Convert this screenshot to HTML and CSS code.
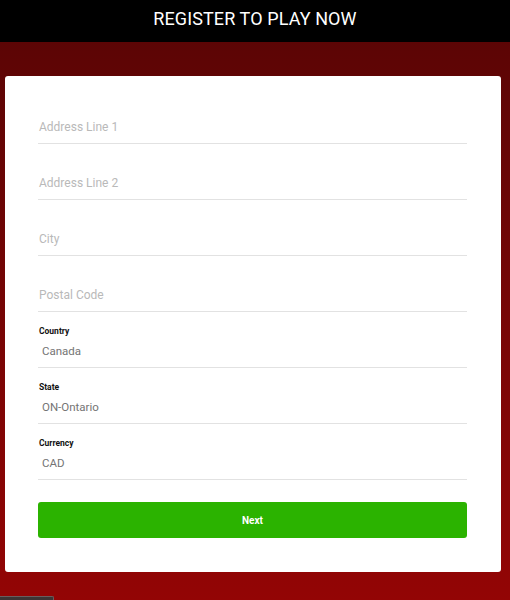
FILE: index.html
```html
<!DOCTYPE html>
<html>
<head>
<meta charset="utf-8">
<link rel="stylesheet" href="styles.css">
</head>
<body>
<header class="topbar">REGISTER TO PLAY NOW</header>
<main class="card">
  <div class="field"><span class="placeholder">Address Line 1</span></div>
  <div class="field"><span class="placeholder">Address Line 2</span></div>
  <div class="field"><span class="placeholder">City</span></div>
  <div class="field"><span class="placeholder">Postal Code</span></div>
  <div class="field labeled"><span class="label">Country</span><span class="value">Canada</span></div>
  <div class="field labeled"><span class="label">State</span><span class="value">ON-Ontario</span></div>
  <div class="field labeled"><span class="label">Currency</span><span class="value">CAD</span></div>
  <button class="next">Next</button>
</main>
<div class="tab"></div>
</body>
</html>
```
FILE: styles.css
```css
html, body {
  margin: 0;
  padding: 0;
}
body {
  width: 510px;
  height: 600px;
  overflow: hidden;
  font-family: Roboto, "Liberation Sans", sans-serif;
  background: linear-gradient(to bottom, #000 0, #000 42px, #5c0505 42px, #930505 600px);
}
.topbar {
  height: 42px;
  display: flex;
  align-items: center;
  justify-content: center;
  color: #fff;
  font-size: 18px;
  letter-spacing: 0.1px;
  padding-bottom: 6px;
  box-sizing: border-box;
  background: #000;
}
.card {
  display: block;
  margin: 34px 9px 0 5px;
  height: 496px;
  box-sizing: border-box;
  padding: 12px 34px 34px 33px;
  background: #fff;
  border-radius: 3px;
}
.field {
  height: 56px;
  box-sizing: border-box;
  border-bottom: 1px solid #e2e2e2;
  display: flex;
  flex-direction: column;
  justify-content: flex-end;
  padding-bottom: 8px;
}
.placeholder {
  font-size: 12px;
  line-height: 16px;
  color: #b9b9b9;
  padding-left: 1px;
}
.labeled {
  justify-content: flex-start;
  padding-top: 13px;
}
.label {
  font-size: 8.5px;
  line-height: 12px;
  font-weight: 700;
  color: #111;
  padding-left: 1px;
}
.value {
  margin-top: 6px;
  padding-left: 4px;
  font-size: 11.5px;
  line-height: 16px;
  color: #747474;
}
.next {
  display: block;
  width: 100%;
  height: 36px;
  margin-top: 22px;
  border: 0;
  border-radius: 3px;
  background: #2bb300;
  color: #fff;
  font-family: Roboto, "Liberation Sans", sans-serif;
  font-weight: 700;
  font-size: 10px;
  cursor: pointer;
}
.tab {
  margin-top: 24px;
  width: 53px;
  height: 10px;
  background: #3e3535;
  border-top: 1px solid #6a5d5d;
  border-right: 1px solid #6a5d5d;
  border-radius: 0 2px 0 0;
}
```
